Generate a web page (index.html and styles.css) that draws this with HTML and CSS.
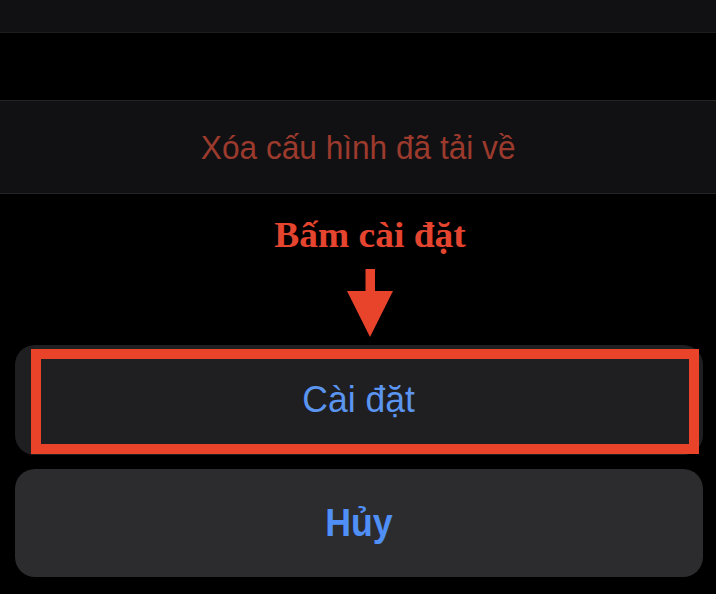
FILE: index.html
```html
<!DOCTYPE html>
<html lang="vi">
<head>
<meta charset="utf-8">
<title>Cài đặt cấu hình</title>
<link rel="stylesheet" href="styles.css">
</head>
<body>
  <div class="top-row"></div>
  <div class="delete-row"><span class="delete-text">Xóa cấu hình đã tải về</span></div>
  <div class="annotation">
    <div class="label">Bấm cài đặt</div>
    <svg class="arrow" width="46" height="68" viewBox="0 0 46 68">
      <rect x="18.5" y="0" width="9.5" height="23" fill="#e8432b"/>
      <polygon points="0,22 46,22 23,68" fill="#e8432b"/>
    </svg>
  </div>
  <div class="sheet">
    <div class="btn btn-install">
      <span class="btn-text">Cài đặt</span>
      <div class="highlight"></div>
    </div>
    <div class="btn btn-cancel">
      <span class="btn-text bold">Hủy</span>
    </div>
  </div>
</body>
</html>
```

FILE: styles.css
```css
html, body {
  margin: 0;
  padding: 0;
  background: #000;
  width: 716px;
  height: 594px;
  overflow: hidden;
  font-family: "Liberation Sans", Arial, sans-serif;
}

.top-row {
  height: 32px;
  background: #111113;
  border-bottom: 1px solid #1d1d1f;
}

.delete-row {
  margin-top: 67px;
  height: 92px;
  background: #111113;
  border-top: 1px solid #242426;
  border-bottom: 1px solid #242426;
  display: flex;
  align-items: center;
  justify-content: center;
}

.delete-text {
  color: #9c3a2d;
  font-size: 34px;
  display: inline-block;
  transform: scaleX(0.93);
}

.annotation {
  display: flex;
  flex-direction: column;
  align-items: center;
  padding-left: 24px;
}

.label {
  margin-top: 23px;
  font-family: "Liberation Serif", "Times New Roman", serif;
  font-weight: bold;
  font-size: 36px;
  line-height: 36px;
  color: #e5442f;
  transform: scaleX(1.04);
}

.arrow {
  display: block;
  margin-top: 16px;
}

.sheet {
  margin-top: 8px;
  padding: 0 13px 0 15px;
  display: flex;
  flex-direction: column;
  gap: 14px;
}

.btn {
  position: relative;
  border-radius: 20px;
  display: flex;
  align-items: center;
  justify-content: center;
}

.btn-install {
  height: 110px;
  background: #1f1f21;
}

.btn-cancel {
  height: 108px;
  background: #2c2c2e;
}

.btn-text {
  font-size: 37px;
  color: #5b95f0;
  display: inline-block;
  transform: scaleX(0.96);
}

.btn-text.bold {
  font-weight: bold;
  font-size: 38px;
  color: #4f8ff6;
  transform: scaleX(0.94);
}

.highlight {
  position: absolute;
  left: 16px;
  top: 4px;
  right: 4px;
  bottom: 1px;
  border: 10px solid #e9432a;
}
```
